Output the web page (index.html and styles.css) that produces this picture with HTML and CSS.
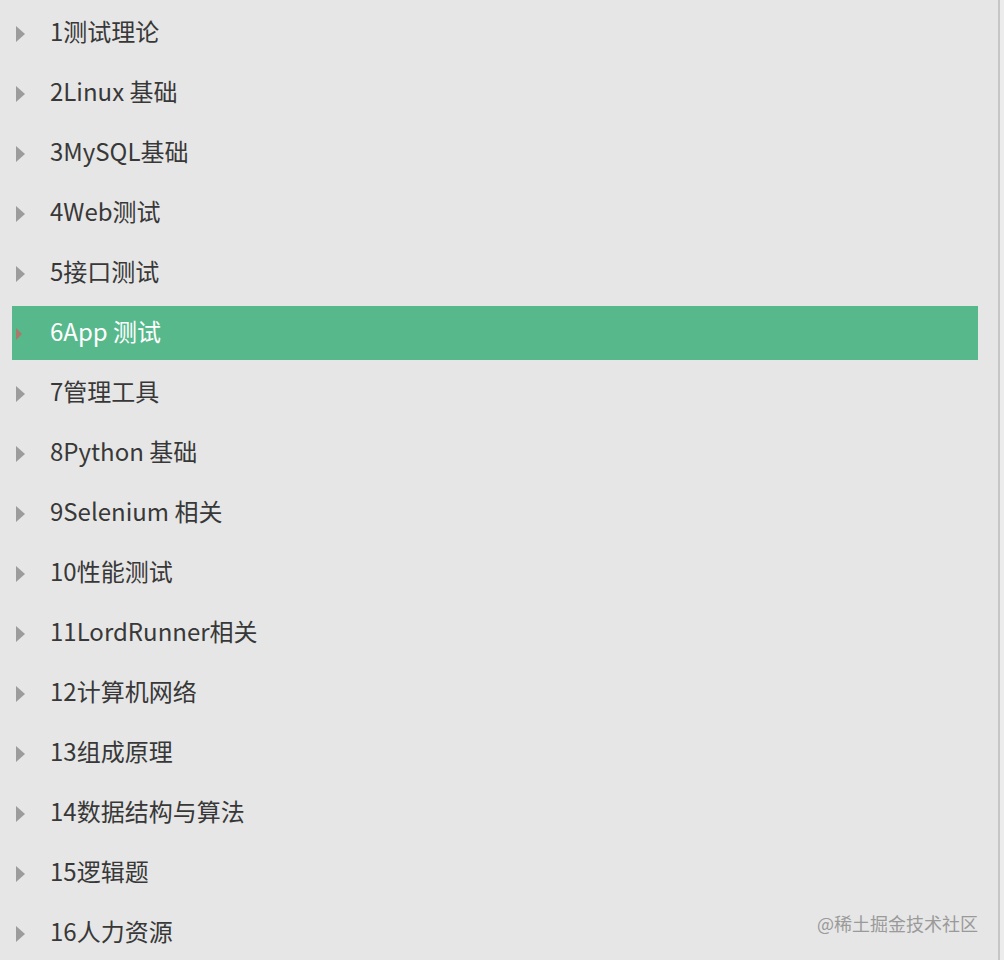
FILE: index.html
```html
<!DOCTYPE html>
<html lang="zh-CN">
<head>
  <meta charset="UTF-8" />
  <meta name="viewport" content="width=device-width, initial-scale=1.0" />
  <title>软件测试目录</title>
  <link rel="stylesheet" href="styles.css">
</head>
<body>
  <div class="panel">
    <ul class="tree">
      <li class="node"><div class="row"><span class="arrow"></span><span class="name">1测试理论</span></div></li>
      <li class="node"><div class="row"><span class="arrow"></span><span class="name">2Linux 基础</span></div></li>
      <li class="node"><div class="row"><span class="arrow"></span><span class="name">3MySQL基础</span></div></li>
      <li class="node"><div class="row"><span class="arrow"></span><span class="name">4Web测试</span></div></li>
      <li class="node"><div class="row"><span class="arrow"></span><span class="name">5接口测试</span></div></li>
      <li class="node"><div class="row active"><span class="arrow"></span><span class="name">6App 测试</span></div></li>
      <li class="node"><div class="row"><span class="arrow"></span><span class="name">7管理工具</span></div></li>
      <li class="node"><div class="row"><span class="arrow"></span><span class="name">8Python 基础</span></div></li>
      <li class="node"><div class="row"><span class="arrow"></span><span class="name">9Selenium 相关</span></div></li>
      <li class="node"><div class="row"><span class="arrow"></span><span class="name">10性能测试</span></div></li>
      <li class="node"><div class="row"><span class="arrow"></span><span class="name">11LordRunner相关</span></div></li>
      <li class="node"><div class="row"><span class="arrow"></span><span class="name">12计算机网络</span></div></li>
      <li class="node"><div class="row"><span class="arrow"></span><span class="name">13组成原理</span></div></li>
      <li class="node"><div class="row"><span class="arrow"></span><span class="name">14数据结构与算法</span></div></li>
      <li class="node"><div class="row"><span class="arrow"></span><span class="name">15逻辑题</span></div></li>
      <li class="node"><div class="row"><span class="arrow"></span><span class="name">16人力资源</span></div></li>
    </ul>
    <div class="watermark">@稀土掘金技术社区</div>
  </div>
</body>
</html>
```

FILE: styles.css
```css
html, body {
  margin: 0;
  padding: 0;
  background-color: #ececec;
}
body {
  font-family: "Noto Sans CJK SC", "Noto Sans", sans-serif;
  width: 1004px;
  height: 960px;
  overflow: hidden;
}
.panel {
  position: relative;
  width: 998px;
  height: 960px;
  background-color: #e6e6e6;
  border-right: 2px solid #c6c6c6;
}
.tree {
  list-style: none;
  margin: 0;
  padding: 3px 20px 0 12px;
}
.node {
  height: 60px;
  padding: 3px 0;
  box-sizing: border-box;
}
.row {
  display: flex;
  align-items: center;
  height: 100%;
  padding-left: 4px;
}
.arrow {
  width: 0;
  height: 0;
  border-top: 8px solid transparent;
  border-bottom: 8px solid transparent;
  border-left: 9px solid #9c9c9c;
  margin-top: 2px;
  margin-right: 25px;
}
.name {
  font-size: 24px;
  color: #383838;
  line-height: 1;
  margin-bottom: 4px;
}
.row.active {
  background-color: #57b98b;
}
.row.active .arrow {
  border-left-color: #a9796a;
  border-top-width: 6px;
  border-bottom-width: 6px;
  border-left-width: 6px;
  margin-right: 28px;
}
.row.active .name {
  color: #ffffff;
}
.watermark {
  position: absolute;
  right: 20px;
  bottom: 24px;
  font-size: 18px;
  color: #9a9a9a;
}
```
